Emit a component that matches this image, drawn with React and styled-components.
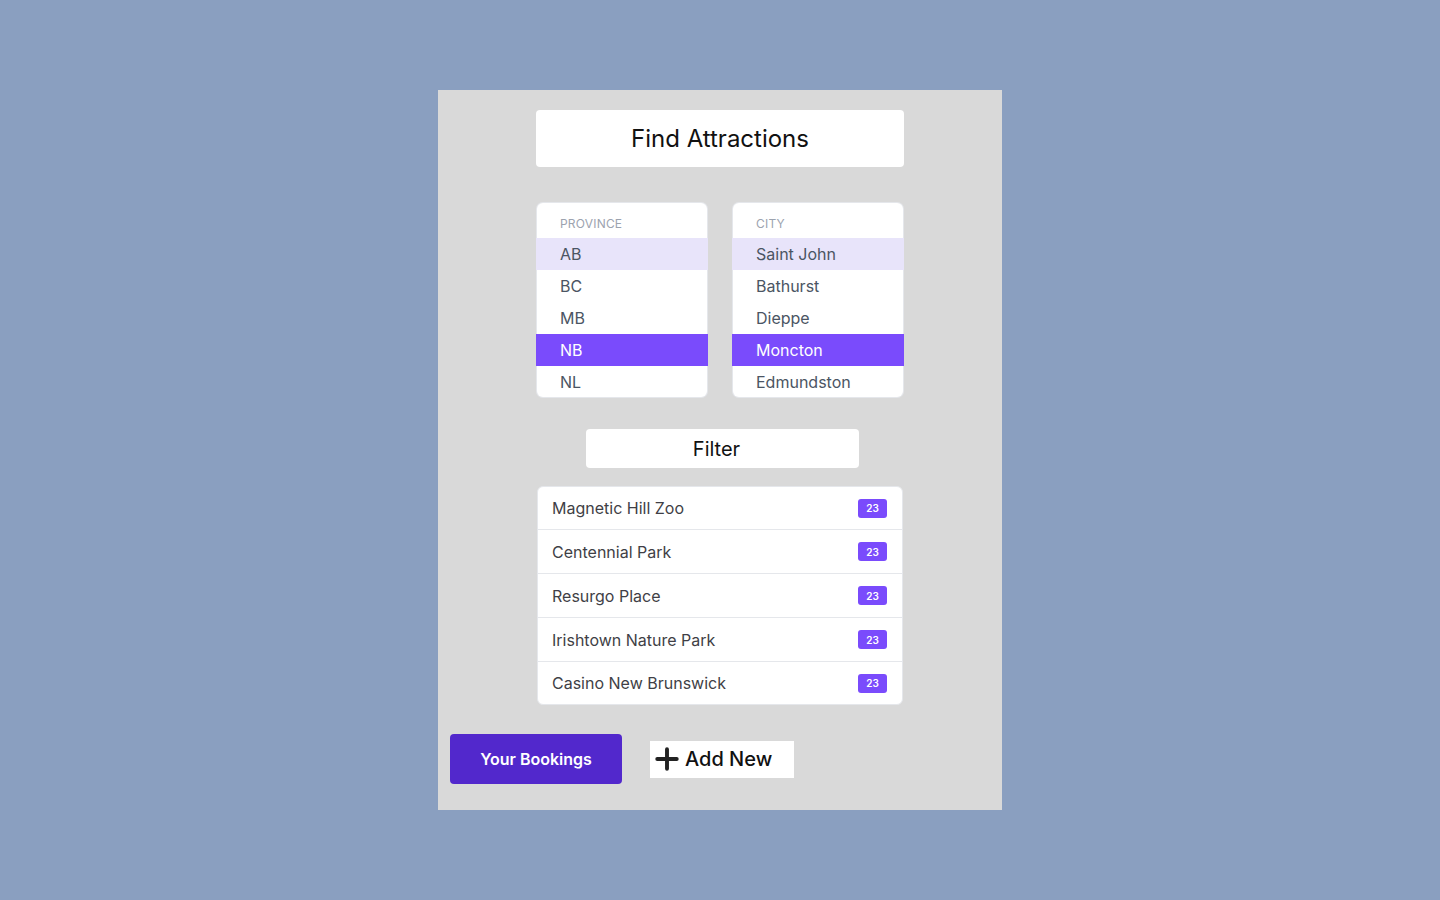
import React from 'react';
import styled, {createGlobalStyle} from 'styled-components';

const GlobalStyle = createGlobalStyle`
  html, body {
    margin: 0;
    padding: 0;
    height: 100%;
    background: #8a9fc0;
    font-family: Inter, "Noto Sans", sans-serif;
  }
  #root {
    min-height: 100vh;
    display: flex;
    align-items: center;
    justify-content: center;
  }
`;

const Panel = styled.main`
  width: 564px;
  box-sizing: border-box;
  background: #d9d9d9;
  padding: 20px 12px 26px;
  display: flex;
  flex-direction: column;
  align-items: center;
`;

const TitleBox = styled.h1`
  margin: 0;
  width: 368px;
  height: 57px;
  background: #fff;
  border-radius: 4px;
  display: flex;
  align-items: center;
  justify-content: center;
  font-size: 24px;
  font-weight: 400;
  color: #111;
`;

const Selectors = styled.div`
  margin-top: 36px;
  display: flex;
  gap: 26px;
`;

const ListBox = styled.div`
  width: 170px;
  height: 194px;
  background: #fff;
  box-shadow: 0 0 0 1px #e5e7eb;
  border-radius: 6px;
  display: flex;
  flex-direction: column;
`;

const ListLabel = styled.div`
  height: 35px;
  flex-shrink: 0;
  box-sizing: border-box;
  padding: 14px 0 0 23px;
  font-size: 12px;
  line-height: 14px;
  color: #9ca3af;
  text-transform: uppercase;
  letter-spacing: 0.2px;
`;

const Option = styled.div`
  height: 32px;
  flex-shrink: 0;
  margin: 0 -1px;
  padding-left: 24px;
  display: flex;
  align-items: center;
  font-size: 16px;
  color: ${p => (p.$selected ? '#fff' : '#4b5563')};
  background: ${p => (p.$selected ? '#7a4bfc' : p.$hover ? '#e8e4fa' : 'transparent')};
`;

const FilterBox = styled.div`
  margin-top: 32px;
  margin-left: 5px;
  width: 273px;
  height: 39px;
  background: #fff;
  border-radius: 4px;
  display: flex;
  align-items: center;
  justify-content: center;
  padding-right: 12px;
  box-sizing: border-box;
  font-size: 20px;
  color: #111;
`;

const Results = styled.ul`
  margin: 18px 0 0;
  padding: 0;
  list-style: none;
  width: 366px;
  box-sizing: border-box;
  background: #fff;
  border: 1px solid #e5e7eb;
  border-radius: 6px;
`;

const ResultRow = styled.li`
  height: 42px;
  box-sizing: border-box;
  padding: 0 15px 0 14px;
  display: flex;
  align-items: center;
  justify-content: space-between;
  font-size: 16px;
  color: #3f3f46;
  & + & {
    height: 44px;
    border-top: 1px solid #e5e7eb;
  }
  &:last-child {
    height: 43px;
  }
`;

const Badge = styled.span`
  width: 29px;
  height: 19px;
  border-radius: 3px;
  background: #7a4bfc;
  color: #fff;
  font-size: 10px;
  font-weight: 600;
  display: flex;
  align-items: center;
  justify-content: center;
`;

const Actions = styled.div`
  align-self: stretch;
  margin-top: 29px;
  display: flex;
  align-items: center;
  gap: 28px;
`;

const PrimaryButton = styled.button`
  width: 172px;
  height: 50px;
  border: none;
  border-radius: 4px;
  background: #5228cc;
  color: #fff;
  font-family: inherit;
  font-size: 16px;
  font-weight: 600;
  cursor: pointer;
`;

const AddButton = styled.button`
  width: 144px;
  height: 37px;
  border: none;
  border-radius: 0;
  background: #fff;
  padding: 0 0 0 4px;
  display: flex;
  align-items: center;
  gap: 5px;
  font-family: inherit;
  font-size: 20px;
  font-weight: 500;
  color: #111;
  cursor: pointer;
`;

const provinces = ['AB', 'BC', 'MB', 'NB', 'NL'];
const cities = ['Saint John', 'Bathurst', 'Dieppe', 'Moncton', 'Edmundston'];
const attractions = ['Magnetic Hill Zoo', 'Centennial Park', 'Resurgo Place', 'Irishtown Nature Park', 'Casino New Brunswick'];

function Selector({label, options, hover, selected}) {
  return (
    <ListBox>
      <ListLabel>{label}</ListLabel>
      {options.map(o => (
        <Option key={o} $hover={o === hover} $selected={o === selected}>
          {o}
        </Option>
      ))}
    </ListBox>
  );
}

export default function App() {
  return (
    <>
      <GlobalStyle />
      <Panel>
        <TitleBox>Find Attractions</TitleBox>
        <Selectors>
          <Selector label="Province" options={provinces} hover="AB" selected="NB" />
          <Selector label="City" options={cities} hover="Saint John" selected="Moncton" />
        </Selectors>
        <FilterBox>Filter</FilterBox>
        <Results>
          {attractions.map(a => (
            <ResultRow key={a}>
              {a}
              <Badge>23</Badge>
            </ResultRow>
          ))}
        </Results>
        <Actions>
          <PrimaryButton>Your Bookings</PrimaryButton>
          <AddButton>
            <svg width="26" height="26" viewBox="0 0 24 24" fill="none" stroke="#222" strokeWidth="3.6" strokeLinecap="round">
              <path d="M12 3v18M3 12h18" />
            </svg>
            Add New
          </AddButton>
        </Actions>
      </Panel>
    </>
  );
}
